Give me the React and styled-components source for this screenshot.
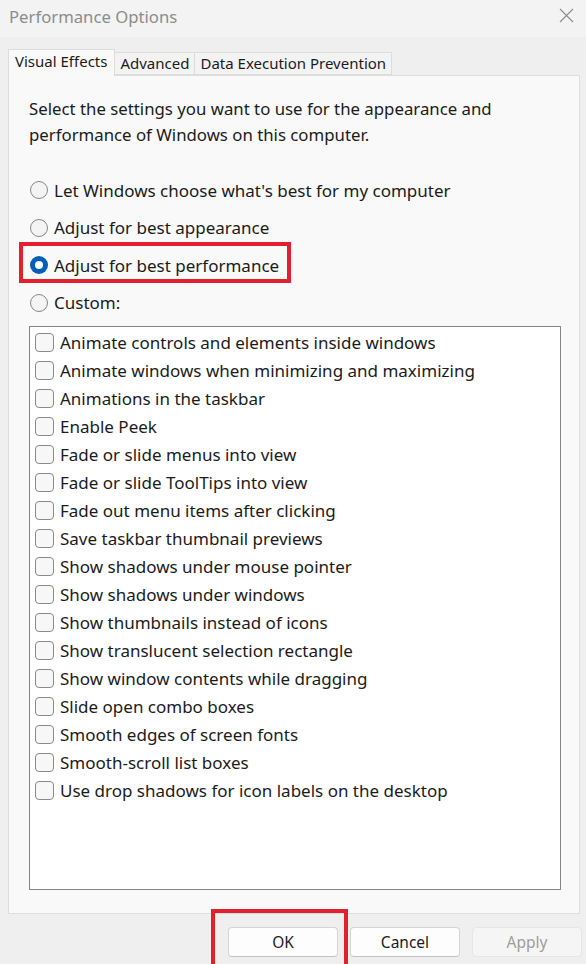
import React, { useState } from 'react'
import styled, { createGlobalStyle } from 'styled-components'

const GlobalStyle = createGlobalStyle`
  html, body {
    margin: 0;
    padding: 0;
    background: #efefef;
  }
  body {
    font-family: "Noto Sans", "Open Sans", sans-serif;
    color: #1b1b1b;
  }
`

const Window = styled.div`
  width: 586px;
  height: 964px;
  display: flex;
  flex-direction: column;
  background: #efefef;
  overflow: hidden;
`

const TitleBar = styled.div`
  height: 37px;
  flex-shrink: 0;
  display: flex;
  align-items: center;
  justify-content: space-between;
  padding: 0 12px 0 9px;
  background: #f3f3f3;
`

const Title = styled.span`
  font-size: 16.7px;
  color: #8c8c8c;
  margin-top: -4px;
`

const CloseButton = styled.button`
  border: none;
  background: transparent;
  padding: 0;
  width: 16px;
  height: 16px;
  margin-top: -6px;
  display: flex;
  align-items: center;
  justify-content: center;
  cursor: pointer;
`

const TabStrip = styled.div`
  display: flex;
  align-items: flex-end;
  padding: 12px 0 0 8px;
  height: 26px;
  position: relative;
  z-index: 1;
`

const Tab = styled.button`
  font-family: inherit;
  font-size: 15px;
  color: #1b1b1b;
  border: 1px solid #dcdcdc;
  border-bottom: ${p => (p.$active ? 'none' : '1px solid #dcdcdc')};
  margin-left: ${p => (p.$active ? '0' : '-1px')};
  background: ${p => (p.$active ? '#f9f9f9' : '#f3f3f3')};
  height: ${p => (p.$active ? '27px' : '23px')};
  padding: ${p => (p.$active ? '0 7px 3px 6px' : '0 5px')};
  margin-bottom: ${p => (p.$active ? '-1px' : '0')};
  display: flex;
  align-items: center;
  line-height: 1;
  cursor: default;
`

const Panel = styled.div`
  margin: 0 6px 0 8px;
  border: 1px solid #dedede;
  background: #f9f9f9;
  padding: 20px 18px 23px 20px;
  display: flex;
  flex-direction: column;
`

const Intro = styled.p`
  margin: 0;
  font-size: 16.8px;
  line-height: 26px;
`

const RadioGroup = styled.div`
  display: flex;
  flex-direction: column;
  gap: 17.5px;
  margin-top: 32px;
  padding-left: 1px;
`

const RadioRow = styled.label`
  position: relative;
  display: flex;
  align-items: center;
  gap: 6px;
  height: 20px;
  font-size: 17px;
  cursor: default;

  ${p =>
    p.$marked &&
    `
    &::after {
      content: '';
      position: absolute;
      left: -11px;
      top: -13px;
      width: 264px;
      height: 33px;
      border: 4px solid #e3202f;
      pointer-events: none;
    }
  `}
`

const RadioDot = styled.span`
  width: 18px;
  height: 18px;
  box-sizing: border-box;
  border-radius: 50%;
  flex-shrink: 0;
  background: ${p => (p.$checked ? '#005fb8' : '#f4f4f4')};
  border: ${p => (p.$checked ? 'none' : '1px solid #878787')};
  display: flex;
  align-items: center;
  justify-content: center;

  &::before {
    content: '';
    display: ${p => (p.$checked ? 'block' : 'none')};
    width: 8px;
    height: 8px;
    border-radius: 50%;
    background: #ffffff;
  }
`

const ListBox = styled.div`
  margin-top: 13px;
  height: 564px;
  box-sizing: border-box;
  border: 1px solid #858585;
  background: #ffffff;
  padding: 2px 0 0 5px;
  display: flex;
  flex-direction: column;
`

const CheckRow = styled.label`
  height: 28px;
  display: flex;
  align-items: center;
  gap: 6px;
  font-size: 17px;
  cursor: default;
`

const CheckBox = styled.span`
  width: 19px;
  height: 19px;
  box-sizing: border-box;
  border: 1px solid #8a8a8a;
  border-radius: 4px;
  background: #f7f7f7;
  flex-shrink: 0;
`

const ButtonRow = styled.div`
  display: flex;
  justify-content: flex-end;
  gap: 12px;
  padding: 13px 4px 0 0;
`

const ButtonSlot = styled.div`
  position: relative;

  ${p =>
    p.$marked &&
    `
    &::after {
      content: '';
      position: absolute;
      left: -17px;
      top: -18px;
      right: -10px;
      bottom: -20px;
      border: 4px solid #e3202f;
      pointer-events: none;
    }
  `}
`

const DialogButton = styled.button`
  width: 110px;
  height: 30px;
  box-sizing: border-box;
  font-family: inherit;
  font-size: 15.5px;
  border-radius: 4px;
  border: 1px solid ${p => (p.disabled ? '#e6e6e6' : '#d4d4d4')};
  border-bottom-color: ${p => (p.disabled ? '#e6e6e6' : '#c2c2c2')};
  background: ${p => (p.disabled ? '#f5f5f5' : '#fdfdfd')};
  color: ${p => (p.disabled ? '#9d9d9d' : '#1b1b1b')};
  padding: 0;
  cursor: default;
`

const options = [
  "Let Windows choose what's best for my computer",
  'Adjust for best appearance',
  'Adjust for best performance',
  'Custom:',
]

const effects = [
  'Animate controls and elements inside windows',
  'Animate windows when minimizing and maximizing',
  'Animations in the taskbar',
  'Enable Peek',
  'Fade or slide menus into view',
  'Fade or slide ToolTips into view',
  'Fade out menu items after clicking',
  'Save taskbar thumbnail previews',
  'Show shadows under mouse pointer',
  'Show shadows under windows',
  'Show thumbnails instead of icons',
  'Show translucent selection rectangle',
  'Show window contents while dragging',
  'Slide open combo boxes',
  'Smooth edges of screen fonts',
  'Smooth-scroll list boxes',
  'Use drop shadows for icon labels on the desktop',
]

const App = () => {
  const [choice, setChoice] = useState(2)

  return (
    <>
      <GlobalStyle />
      <Window>
        <TitleBar>
          <Title>Performance Options</Title>
          <CloseButton aria-label="Close">
            <svg width="15" height="15" viewBox="0 0 15 15">
              <path d="M1 1 L14 14 M14 1 L1 14" stroke="#8c8c8c" strokeWidth="1.1" fill="none" />
            </svg>
          </CloseButton>
        </TitleBar>

        <TabStrip>
          <Tab $active>Visual Effects</Tab>
          <Tab>Advanced</Tab>
          <Tab>Data Execution Prevention</Tab>
        </TabStrip>

        <Panel>
          <Intro>
            Select the settings you want to use for the appearance and
            <br />
            performance of Windows on this computer.
          </Intro>

          <RadioGroup>
            {options.map((label, i) => (
              <RadioRow key={label} $marked={i === 2} onClick={() => setChoice(i)}>
                <RadioDot $checked={choice === i} />
                {label}
              </RadioRow>
            ))}
          </RadioGroup>

          <ListBox>
            {effects.map(label => (
              <CheckRow key={label}>
                <CheckBox />
                {label}
              </CheckRow>
            ))}
          </ListBox>
        </Panel>

        <ButtonRow>
          <ButtonSlot $marked>
            <DialogButton>OK</DialogButton>
          </ButtonSlot>
          <ButtonSlot>
            <DialogButton>Cancel</DialogButton>
          </ButtonSlot>
          <ButtonSlot>
            <DialogButton disabled>Apply</DialogButton>
          </ButtonSlot>
        </ButtonRow>
      </Window>
    </>
  )
}

export default App
